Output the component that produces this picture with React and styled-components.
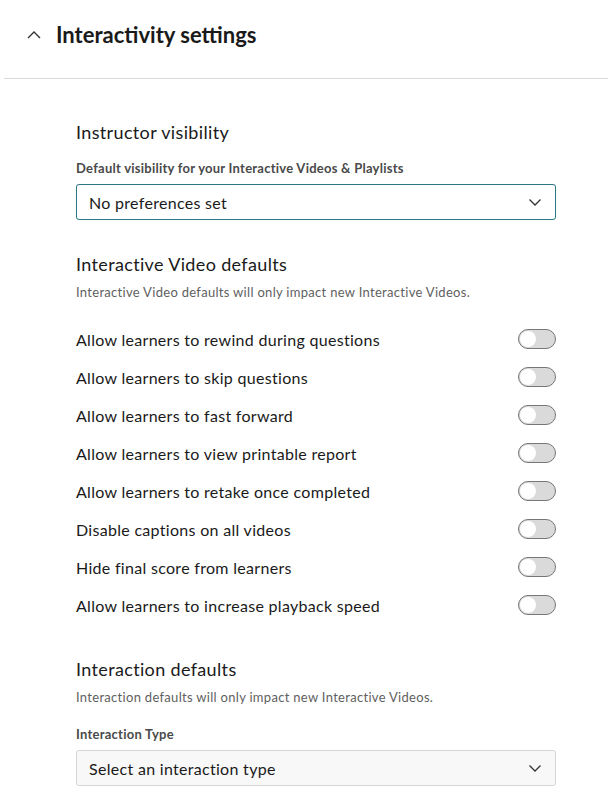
import React from 'react'
import styled, { createGlobalStyle } from 'styled-components'

const GlobalStyle = createGlobalStyle`
  body {
    margin: 0;
    background: #fff;
    font-family: Lato, "Open Sans", sans-serif;
    color: #1c1c1c;
  }
`

const Header = styled.div`
  display: flex;
  align-items: center;
  height: 69px;
  padding-left: 22px;
  margin-left: 4px;
  border-bottom: 1px solid #d9d9d9;
  padding-bottom: 9px;
  box-sizing: content-box;
`

const Chevron = styled.svg`
  width: 16px;
  height: 16px;
  margin-right: 14px;
  color: #333;
`

const Title = styled.h1`
  margin: 0;
  font-size: 22px;
  font-weight: 700;
  color: #1a1a1a;
`

const Content = styled.div`
  width: 480px;
  margin-left: 76px;
  padding-top: 42px;
  letter-spacing: 0.3px;
`

const Section = styled.section`
  margin-bottom: ${p => p.gap || 0}px;
`

const SectionTitle = styled.h2`
  margin: 0;
  font-size: 18px;
  font-weight: 400;
  line-height: 22px;
  letter-spacing: 0.35px;
  color: #1a1a1a;
`

const Description = styled.p`
  margin: 9px 0 0;
  font-size: 13px;
  line-height: 16px;
  color: #5f5f5f;
`

const FieldLabel = styled.div`
  margin-top: ${p => p.top}px;
  font-size: 13px;
  font-weight: 700;
  line-height: 16px;
  letter-spacing: 0.25px;
  color: #4a4a4a;
`

const Select = styled.div`
  display: flex;
  align-items: center;
  justify-content: space-between;
  height: 34px;
  margin-top: 8px;
  padding: 0 12px 0 12px;
  border: 1px solid ${p => (p.focused ? '#2a7885' : '#d6d6d6')};
  border-radius: 3px;
  background: ${p => (p.focused ? '#fff' : '#f8f8f8')};
  font-size: 16px;
  color: #1a1a1a;
`

const SelectChevron = styled.svg`
  width: 16px;
  height: 16px;
  color: #333;
`

const Rows = styled.div`
  margin-top: 20px;
`

const Row = styled.div`
  display: flex;
  align-items: center;
  justify-content: space-between;
  height: 38px;
  font-size: 16px;
  color: #1a1a1a;
`

const Toggle = styled.div`
  position: relative;
  width: 36px;
  height: 18px;
  border: 1px solid #777;
  border-radius: 10px;
  background: #dadada;

  &::after {
    content: '';
    position: absolute;
    top: 1px;
    left: 1px;
    width: 16px;
    height: 16px;
    border-radius: 50%;
    background: #fff;
  }
`

const ChevronDown = () => (
  <SelectChevron viewBox="0 0 16 16" fill="none">
    <path d="M2.5 5.5L8 11l5.5-5.5" stroke="currentColor" strokeWidth="1.3" />
  </SelectChevron>
)

const options = [
  'Allow learners to rewind during questions',
  'Allow learners to skip questions',
  'Allow learners to fast forward',
  'Allow learners to view printable report',
  'Allow learners to retake once completed',
  'Disable captions on all videos',
  'Hide final score from learners',
  'Allow learners to increase playback speed',
]

export default function App() {
  return (
    <>
      <GlobalStyle />
      <Header>
        <Chevron viewBox="0 0 16 16" fill="none">
          <path d="M2 11l6-6 6 6" stroke="currentColor" strokeWidth="1.4" />
        </Chevron>
        <Title>Interactivity settings</Title>
      </Header>
      <Content>
        <Section gap={33}>
          <SectionTitle>Instructor visibility</SectionTitle>
          <FieldLabel top={17}>Default visibility for your Interactive Videos &amp; Playlists</FieldLabel>
          <Select focused>
            No preferences set
            <ChevronDown />
          </Select>
        </Section>
        <Section gap={34}>
          <SectionTitle>Interactive Video defaults</SectionTitle>
          <Description>Interactive Video defaults will only impact new Interactive Videos.</Description>
          <Rows>
            {options.map(o => (
              <Row key={o}>
                {o}
                <Toggle />
              </Row>
            ))}
          </Rows>
        </Section>
        <Section>
          <SectionTitle>Interaction defaults</SectionTitle>
          <Description>Interaction defaults will only impact new Interactive Videos.</Description>
          <FieldLabel top={21}>Interaction Type</FieldLabel>
          <Select>
            Select an interaction type
            <ChevronDown />
          </Select>
        </Section>
      </Content>
    </>
  )
}
